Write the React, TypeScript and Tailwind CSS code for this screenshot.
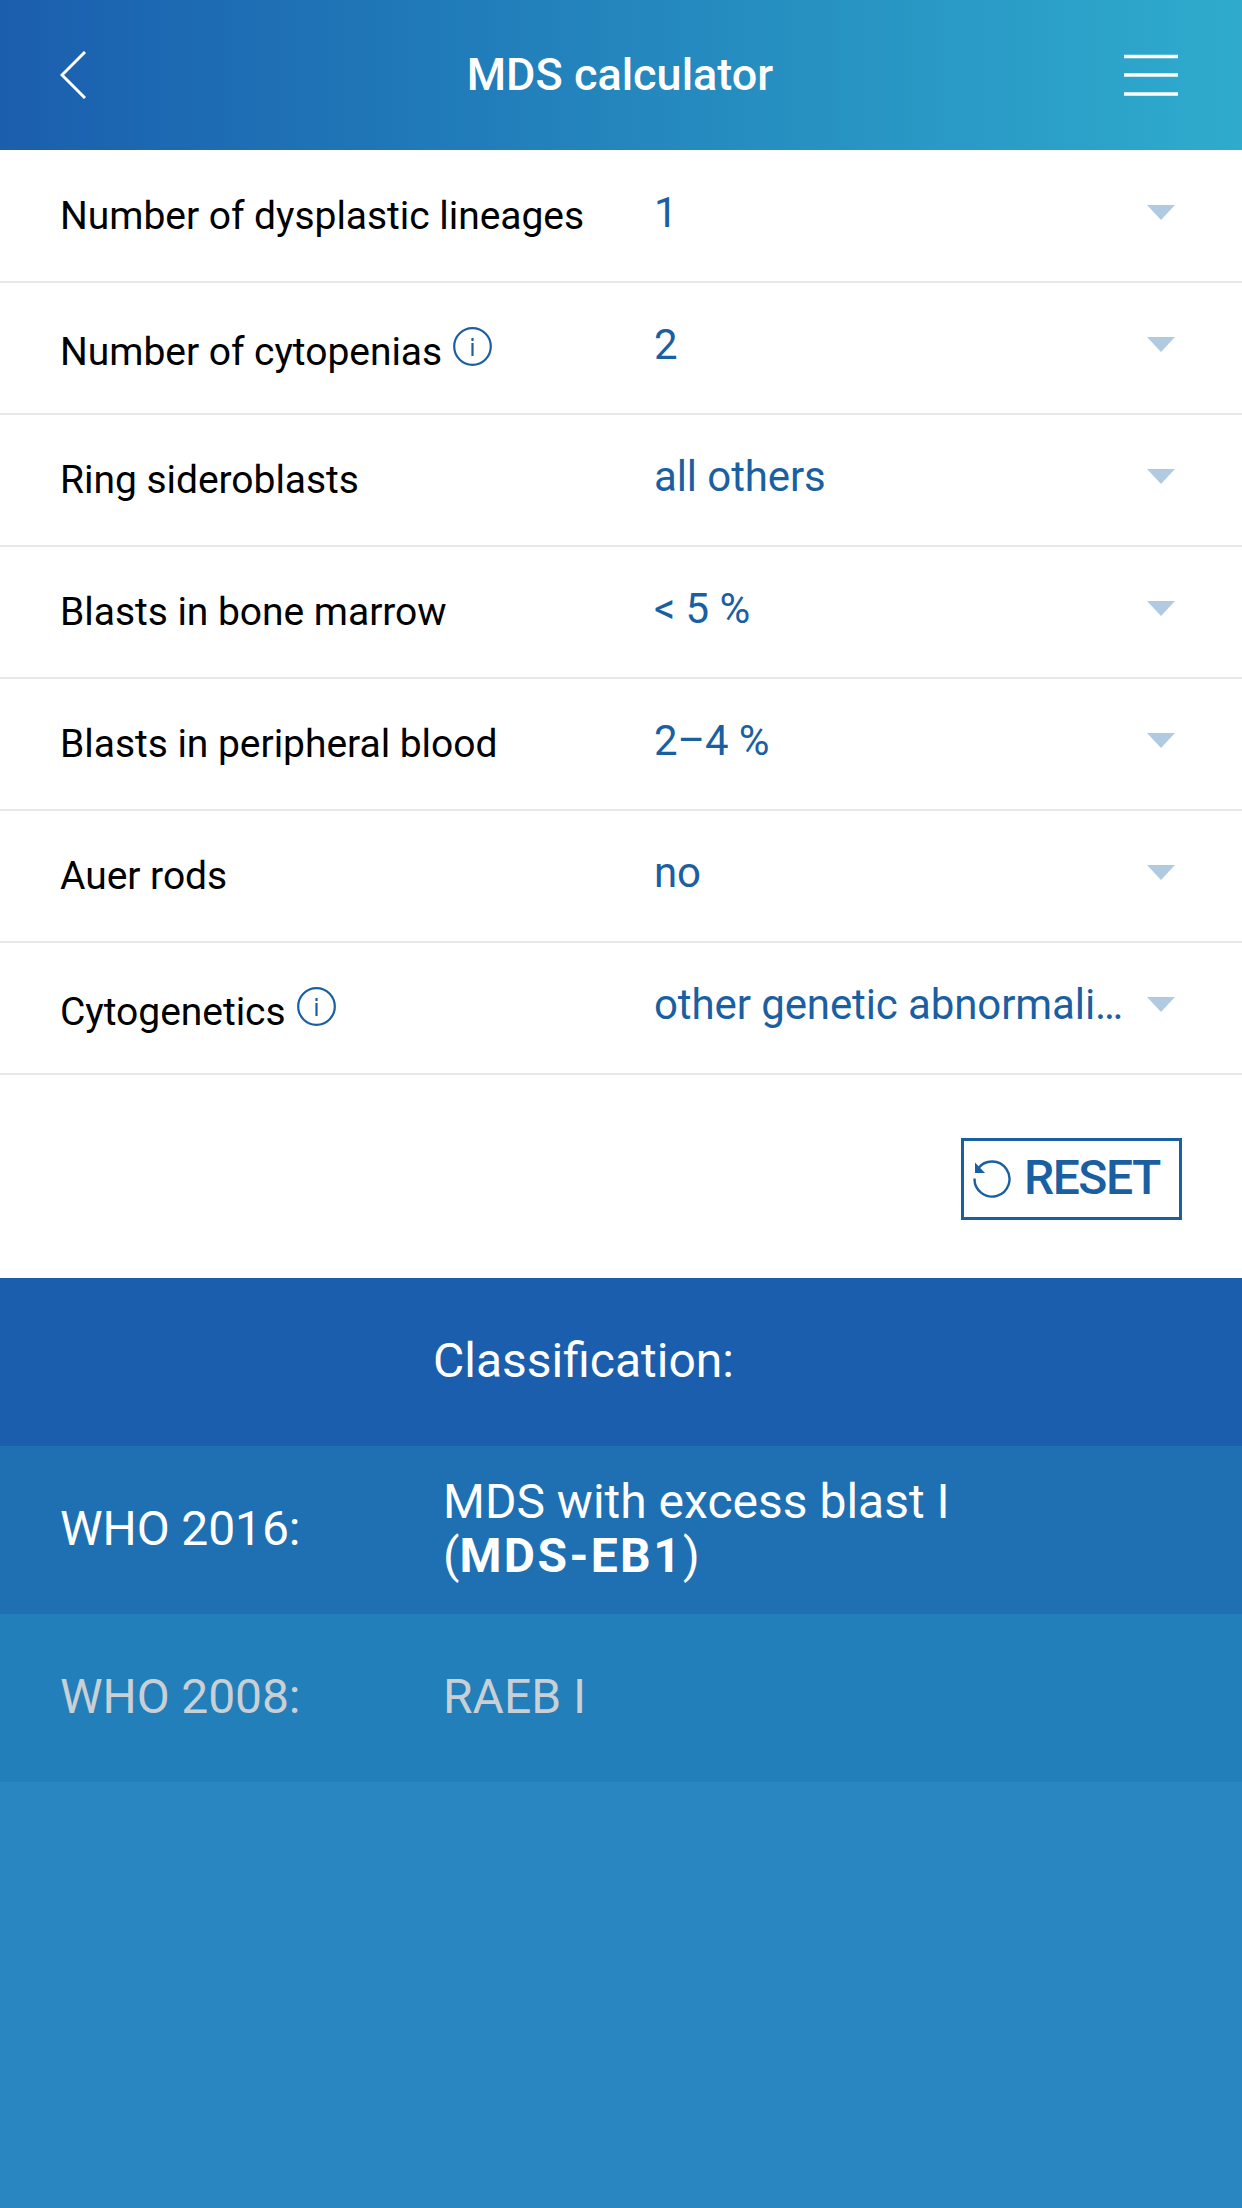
import { useState } from 'react'

type Field = {
  id: string;
  label: string;
  value: string;
  hasInfo?: boolean;
}

type ResultRowProps = {
  label: string;
  className: string;
  children: React.ReactNode;
}

const FIELDS: Field[] = [
  { id: 'lineages', label: 'Number of dysplastic lineages', value: '1' },
  { id: 'cytopenias', label: 'Number of cytopenias', value: '2', hasInfo: true },
  { id: 'sideroblasts', label: 'Ring sideroblasts', value: 'all others' },
  { id: 'marrow', label: 'Blasts in bone marrow', value: '< 5 %' },
  { id: 'blood', label: 'Blasts in peripheral blood', value: '2–4 %' },
  { id: 'auer', label: 'Auer rods', value: 'no' },
  { id: 'cytogenetics', label: 'Cytogenetics', value: 'other genetic abnormalities', hasInfo: true },
]

function Header() {
  return (
    <header className="flex h-[150px] items-center justify-between bg-linear-to-r from-[#1b5eae] via-[#2486bd] to-[#2fabcd] px-[60px] text-white">
      <button aria-label="Back" className="w-[58px]">
        <svg width="26" height="48" viewBox="0 0 26 48" fill="none" stroke="currentColor" strokeWidth="3">
          <path d="M25 1 2 24l23 23" />
        </svg>
      </button>
      <h1 className="pr-0.5 pb-0.5 text-[45px] leading-none font-medium">MDS calculator</h1>
      <button aria-label="Menu" className="flex w-[58px] justify-end pr-1">
        <svg width="54" height="42" viewBox="0 0 54 42" stroke="currentColor" strokeWidth="3.5">
          <path d="M0 2.5h54M0 21h54M0 40h54" />
        </svg>
      </button>
    </header>
  )
}

function InfoIcon() {
  return (
    <svg className="mt-[44px] ml-[11px]" width="39" height="39" viewBox="0 0 39 39" fill="none" stroke="#1b5fa3" strokeWidth="2.2">
      <circle cx="19.5" cy="19.5" r="18.3" />
      <path d="M19.5 16v13M19.5 11v3" />
    </svg>
  )
}

function FieldRow({ field }: { field: Field }) {
  return (
    <div className="flex h-[132px] items-start border-b-2 border-[#e8e8e8] pr-[67px] pl-[60px]">
      <div className="flex w-[594px] items-start">
        <span className={`text-[39px] leading-[46px] tracking-[-0.04px] text-black ${field.hasInfo ? 'mt-[46px]' : 'mt-[42px]'}`}>{field.label}</span>
        {field.hasInfo && <InfoIcon />}
      </div>
      <span className="mt-[37px] w-[476px] truncate text-[42px] leading-[50px] tracking-[-0.1px] text-[#1b5fa3]">{field.value}</span>
      <svg className="mt-[54px] ml-auto" width="28" height="15" viewBox="0 0 28 15" fill="#b0cbe1">
        <path d="M0 0h28L14 15z" />
      </svg>
    </div>
  )
}

function ResultRow({ label, className, children }: ResultRowProps) {
  return (
    <div className={`flex h-[168px] items-center pb-0.5 pl-[60px] text-[48px] leading-[54px] ${className}`}>
      <div className="w-[383px] tracking-[-0.1px]">{label}</div>
      <div className="w-[560px]">{children}</div>
    </div>
  )
}

export default function App() {
  const [fields] = useState<Field[]>(FIELDS)

  return (
    <div className="flex h-[2208px] w-[1242px] flex-col bg-[#2986c0] font-[Roboto,sans-serif]">
      <Header />

      {/* Input form */}
      <main className="h-[1128px] bg-white pt-px">
        {fields.map(field => (
          <FieldRow key={field.id} field={field} />
        ))}
        <div className="flex justify-end pt-[63px] pr-[60px]">
          <button className="flex h-[82px] w-[221px] items-center border-3 border-[#1b5fa3] pl-[8px] text-[#1b5fa3]">
            <svg width="40" height="40" viewBox="0 0 40 40" fill="none" stroke="currentColor" strokeWidth="2.4">
              <path d="M2.5 19.5A17.5 17.5 0 1 0 6 9.5" />
              <path d="M3 3.5v10.5h10z" fill="currentColor" stroke="none" />
            </svg>
            <span className="ml-[12px] pb-0.5 text-[48px] leading-[54px] font-medium tracking-[-1.5px]">RESET</span>
          </button>
        </div>
      </main>

      {/* Result of the classification */}
      <section className="text-white">
        <h2 className="flex h-[168px] items-center bg-[#1c5eae] pb-0.5 pl-[433px] text-[48px] leading-[54px]">Classification:</h2>
        <ResultRow label="WHO 2016:" className="bg-[#1e70b3]">
          MDS with excess blast I (<b className="tracking-[2.4px]">MDS-EB1</b>)
        </ResultRow>
        <ResultRow label="WHO 2008:" className="bg-[#227fb9] text-[#c8d0d6]">
          RAEB I
        </ResultRow>
      </section>
    </div>
  )
}
